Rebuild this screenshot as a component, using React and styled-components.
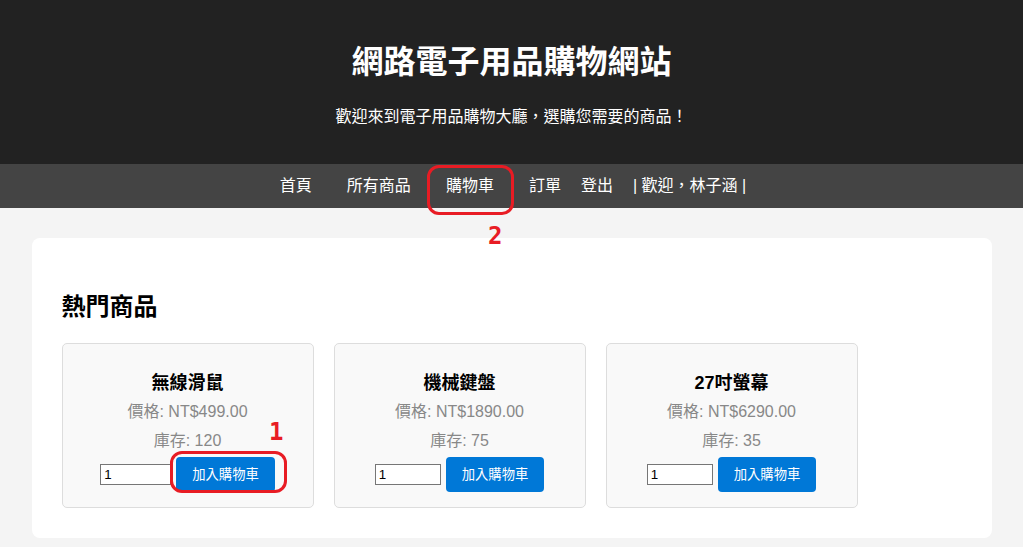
import React from "react";
import styled, { createGlobalStyle } from "styled-components";

const FONT = `"Liberation Sans", Arial, "Noto Sans CJK TC", sans-serif`;

const Global = createGlobalStyle`
  html, body { margin: 0; padding: 0; }
  body {
    background: #f4f4f4;
    font-family: ${FONT};
    color: #000;
  }
`;

const Page = styled.div`
  position: relative;
  min-height: 547px;
`;

const Header = styled.header`
  background: #222222;
  color: #fff;
  text-align: center;
  padding: 42px 0 37px;
  display: flex;
  flex-direction: column;
  gap: 25px;
`;

const Title = styled.h1`
  margin: 0;
  font-size: 32px;
  line-height: 40px;
  font-weight: 700;
`;

const Subtitle = styled.p`
  margin: 0;
  font-size: 16px;
  line-height: 20px;
`;

const Nav = styled.nav`
  background: #444444;
  height: 44px;
  display: flex;
  justify-content: center;
  align-items: center;
  gap: 20px;
  padding-left: 3px;
`;

const NavLink = styled.a`
  color: #fff;
  text-decoration: none;
  font-size: 16px;
  line-height: 44px;
  padding-right: ${(p) => (p.$wide ? "15px" : "0")};
  white-space: pre;
`;

const Container = styled.main`
  max-width: 960px;
  margin: 30px auto 0;
  background: #fff;
  border-radius: 8px;
  padding: 30px;
  box-sizing: border-box;
`;

const Heading = styled.h2`
  margin: 25px 0 22px;
  font-size: 24px;
  line-height: 28px;
  font-weight: 700;
`;

const Grid = styled.div`
  display: flex;
  gap: 20px;
`;

const Card = styled.div`
  width: 252px;
  box-sizing: border-box;
  background: #f9f9f9;
  border: 1px solid #dddddd;
  border-radius: 5px;
  padding: 15px;
  text-align: center;
  display: flex;
  flex-direction: column;
  align-items: center;
`;

const Name = styled.h3`
  margin: 13px 0 0;
  font-size: 18px;
  line-height: 22px;
  font-weight: 700;
`;

const Info = styled.p`
  margin: ${(p) => p.$mt}px 0 0;
  font-size: 16px;
  line-height: 20px;
  color: #888888;
`;

const Row = styled.div`
  margin-top: 6px;
  display: flex;
  align-items: center;
  gap: 5px;
`;

const Qty = styled.input`
  width: ${(p) => p.$w}px;
  height: 21px;
  box-sizing: border-box;
  border: 1px solid #767676;
  border-radius: 0;
  padding: 1px 3px;
  font-family: ${FONT};
  font-size: 13.33px;
  color: #000;
  background: #fff;
  outline: none;
`;

const AddButton = styled.button`
  height: 35px;
  padding: 0 16px;
  border: none;
  border-radius: 4px;
  background: #0078d7;
  color: #fff;
  font-family: ${FONT};
  font-size: 13.33px;
  line-height: 35px;
  cursor: pointer;
`;

const Mark = styled.div`
  position: absolute;
  left: ${(p) => p.$x}px;
  top: ${(p) => p.$y}px;
  width: ${(p) => p.$w}px;
  height: ${(p) => p.$h}px;
  box-sizing: border-box;
  border: 3px solid #e81c24;
  border-radius: 12px;
  pointer-events: none;
`;

const MarkNum = styled.span`
  position: absolute;
  left: ${(p) => p.$x}px;
  top: ${(p) => p.$y}px;
  color: #e81c24;
  font-family: "DejaVu Sans Mono", "Liberation Mono", monospace;
  font-weight: 700;
  font-size: 24px;
  line-height: 24px;
`;

const products = [
  { name: "無線滑鼠", price: "499.00", stock: 120, qtyWidth: 71 },
  { name: "機械鍵盤", price: "1890.00", stock: 75, qtyWidth: 66 },
  { name: "27吋螢幕", price: "6290.00", stock: 35, qtyWidth: 66 },
];

export default function App() {
  return (
    <Page>
      <Global />
      <Header>
        <Title>網路電子用品購物網站</Title>
        <Subtitle>歡迎來到電子用品購物大廳，選購您需要的商品！</Subtitle>
      </Header>
      <Nav>
        <NavLink href="#" $wide>首頁</NavLink>
        <NavLink href="#" $wide>所有商品</NavLink>
        <NavLink href="#" $wide>購物車</NavLink>
        <NavLink href="#">訂單</NavLink>
        <NavLink href="#">登出</NavLink>
        <NavLink as="span">| 歡迎，林子涵 |</NavLink>
      </Nav>
      <Container>
        <Heading>熱門商品</Heading>
        <Grid>
          {products.map((p) => (
            <Card key={p.name}>
              <Name>{p.name}</Name>
              <Info $mt={8}>價格: NT${p.price}</Info>
              <Info $mt={9}>庫存: {p.stock}</Info>
              <Row>
                <Qty type="text" inputMode="numeric" defaultValue="1" $w={p.qtyWidth} />
                <AddButton>加入購物車</AddButton>
              </Row>
            </Card>
          ))}
        </Grid>
      </Container>
      <Mark $x={170} $y={451} $w={117} $h={42} />
      <MarkNum $x={269} $y={420}>1</MarkNum>
      <Mark $x={427} $y={165} $w={87} $h={50} />
      <MarkNum $x={488} $y={224}>2</MarkNum>
    </Page>
  );
}
